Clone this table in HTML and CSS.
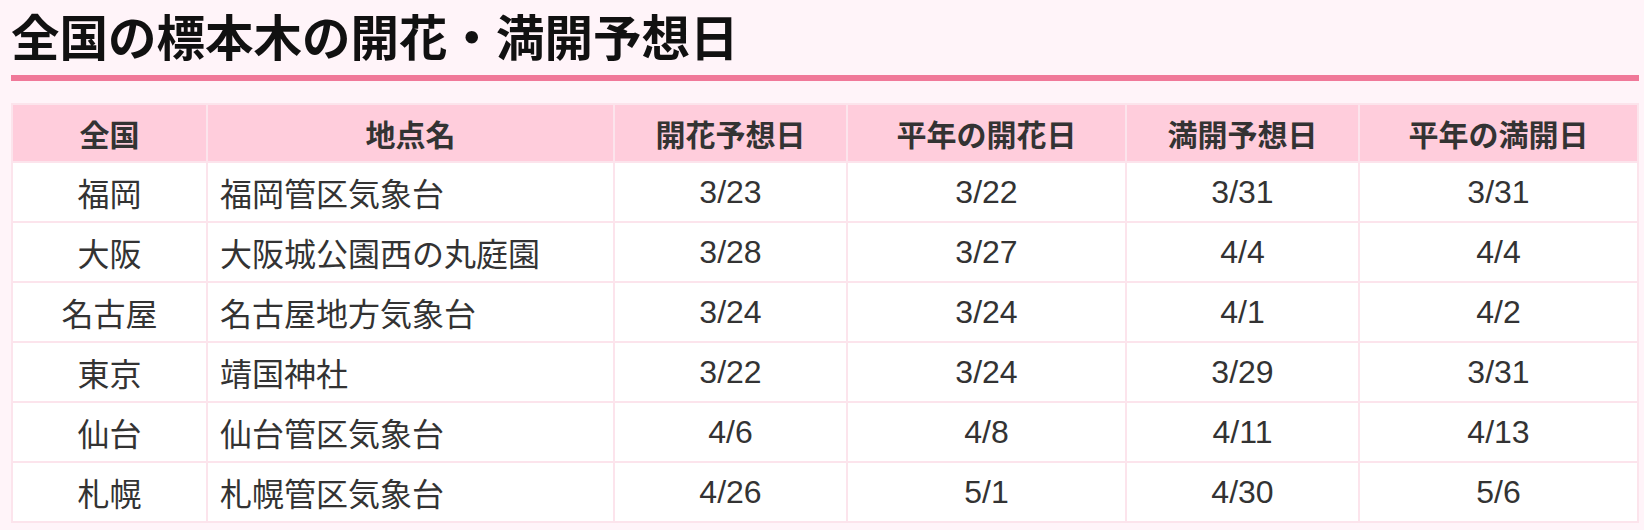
FILE: index.html
```html
<!DOCTYPE html>
<html lang="ja">
<head>
<meta charset="utf-8">
<title>全国の標本木の開花・満開予想日</title>
<link rel="stylesheet" href="styles.css">
</head>
<body>
<section class="forecast">
  <h2 class="forecast-title">全国の標本木の開花・満開予想日</h2>
  <table class="forecast-table">
    <thead>
      <tr>
        <th class="col-area">全国</th>
        <th class="col-place">地点名</th>
        <th class="col-date">開花予想日</th>
        <th class="col-date-wide">平年の開花日</th>
        <th class="col-date">満開予想日</th>
        <th class="col-date-wide">平年の満開日</th>
      </tr>
    </thead>
    <tbody>
      <tr><td>福岡</td><td class="place">福岡管区気象台</td><td>3/23</td><td>3/22</td><td>3/31</td><td>3/31</td></tr>
      <tr><td>大阪</td><td class="place">大阪城公園西の丸庭園</td><td>3/28</td><td>3/27</td><td>4/4</td><td>4/4</td></tr>
      <tr><td>名古屋</td><td class="place">名古屋地方気象台</td><td>3/24</td><td>3/24</td><td>4/1</td><td>4/2</td></tr>
      <tr><td>東京</td><td class="place">靖国神社</td><td>3/22</td><td>3/24</td><td>3/29</td><td>3/31</td></tr>
      <tr><td>仙台</td><td class="place">仙台管区気象台</td><td>4/6</td><td>4/8</td><td>4/11</td><td>4/13</td></tr>
      <tr><td>札幌</td><td class="place">札幌管区気象台</td><td>4/26</td><td>5/1</td><td>4/30</td><td>5/6</td></tr>
    </tbody>
  </table>
</section>
</body>
</html>
```
FILE: styles.css
```css
html, body {
  margin: 0;
  padding: 0;
}

body {
  background: #fff4f9;
  font-family: "Liberation Sans", "Noto Sans CJK JP", sans-serif;
  color: #333;
}

.forecast {
  width: 1628px;
  margin-left: 11px;
}

.forecast-title {
  margin: 0;
  padding-top: 5px;
  padding-bottom: 10px;
  font-size: 48.5px;
  line-height: 60px;
  font-weight: 700;
  color: #111;
  font-family: "Noto Sans CJK JP", sans-serif;
  border-bottom: 6px solid #f07899;
}

.forecast-table {
  margin-top: 22px;
  width: 1628px;
  table-layout: fixed;
  border-collapse: separate;
  border-spacing: 0;
  border-top: 2px solid #fce4ec;
  border-left: 2px solid #fce4ec;
}

.forecast-table th,
.forecast-table td {
  box-sizing: content-box;
  border-right: 2px solid #fce4ec;
  border-bottom: 2px solid #fce4ec;
  padding: 0;
  height: 58px;
  text-align: center;
  vertical-align: middle;
}

.forecast-table th.col-area { box-sizing: border-box; width: 195px; }
.forecast-table th.col-place { box-sizing: border-box; width: 407px; }
.forecast-table th.col-date { box-sizing: border-box; width: 233px; }
.forecast-table th.col-date-wide { box-sizing: border-box; width: 279px; }

.forecast-table th {
  background: #ffcddc;
  font-family: "Noto Sans CJK JP", sans-serif;
  font-size: 30px;
  font-weight: 700;
  color: #333;
}

.forecast-table td {
  background: #fff;
  font-size: 32px;
  font-weight: 400;
  color: #333;
}

.forecast-table td.place {
  text-align: left;
  padding-left: 12px;
}
```
